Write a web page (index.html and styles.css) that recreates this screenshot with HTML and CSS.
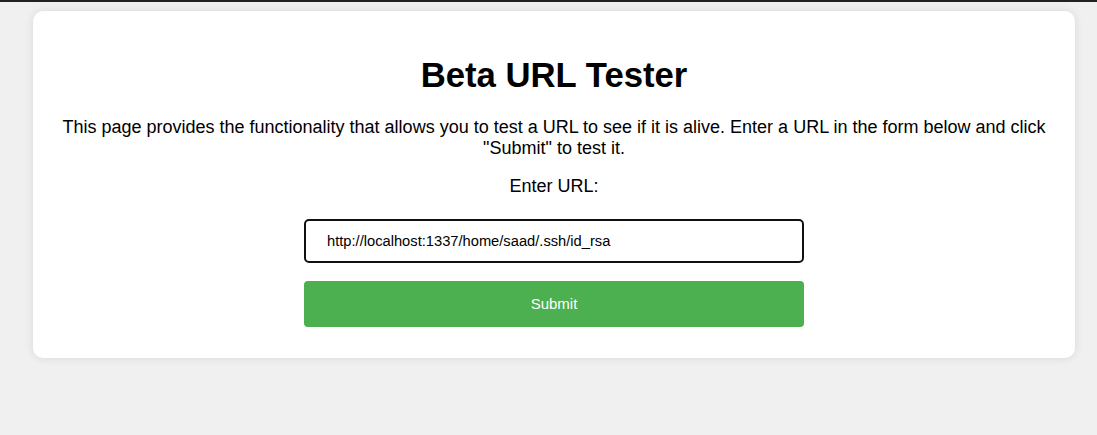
FILE: index.html
```html
<!DOCTYPE html>
<html lang="en">
<head>
<meta charset="utf-8">
<title>Beta URL Tester</title>
<link rel="stylesheet" href="styles.css">
</head>
<body>
<div class="topbar"></div>
<main class="card">
  <h1 class="title">Beta URL Tester</h1>
  <p class="intro">This page provides the functionality that allows you to test a URL to see if it is alive. Enter a URL in the form below and click "Submit" to test it.</p>
  <form class="form">
    <label class="label" for="url">Enter URL:</label>
    <input class="input" id="url" type="text" value="http://localhost:1337/home/saad/.ssh/id_rsa">
    <button class="submit" type="button">Submit</button>
  </form>
</main>
</body>
</html>
```
FILE: styles.css
```css
html, body {
  margin: 0;
  padding: 0;
}
body {
  background: #f0f0f0;
  font-family: "Liberation Sans", Arial, sans-serif;
  color: #000;
  min-height: 435px;
}
.topbar {
  height: 2px;
  background: #202124;
}
.card {
  margin: 9px 22px 0 33px;
  background: #fff;
  border-radius: 10px;
  box-shadow: 0 0 10px rgba(0, 0, 0, 0.1);
  padding: 45px 20px 31px;
  display: flex;
  flex-direction: column;
  align-items: center;
  text-align: center;
}
.title {
  margin: 0;
  font-size: 34.7px;
  line-height: 39px;
  font-weight: bold;
}
.intro {
  margin: 22px 0 0;
  font-size: 18px;
  line-height: 21px;
}
.form {
  margin-top: 17px;
  display: flex;
  flex-direction: column;
  align-items: center;
  width: 500px;
}
.label {
  font-size: 18px;
  line-height: 21px;
}
.input {
  box-sizing: border-box;
  margin-top: 22px;
  width: 500px;
  height: 44px;
  padding: 0 21px;
  border: 2px solid #111;
  border-radius: 5px;
  font-family: "Liberation Sans", Arial, sans-serif;
  font-size: 14.7px;
  color: #000;
  background: #fff;
  outline: none;
}
.submit {
  margin-top: 18px;
  width: 500px;
  height: 46px;
  padding: 0 0 2px;
  border: none;
  border-radius: 4px;
  background: #4caf50;
  color: #fff;
  font-family: "Liberation Sans", Arial, sans-serif;
  font-size: 15px;
  cursor: pointer;
}
```
